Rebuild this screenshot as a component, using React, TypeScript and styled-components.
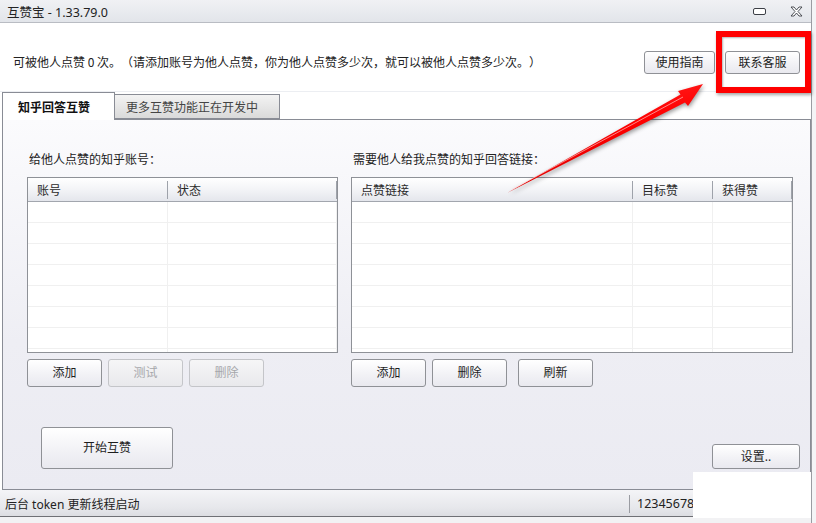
import React from 'react'
import styled, { createGlobalStyle } from 'styled-components'

const GlobalStyle = createGlobalStyle`
  html, body {
    margin: 0;
    padding: 0;
    background: #f4f4f6;
  }
  body {
    font-family: "Noto Sans", "Noto Sans CJK SC", sans-serif;
    font-size: 12px;
    color: #1e1e1e;
    text-spacing-trim: space-all;
  }
`

const Page = styled.div`
  position: relative;
  width: 816px;
  height: 523px;
  overflow: hidden;
`

const Window = styled.div`
  width: 811px;
  border-right: 1px solid #9a9ca2;
  background: #ffffff;
  display: flex;
  flex-direction: column;
`

const TitleBar = styled.div`
  height: 22px;
  display: flex;
  align-items: center;
  padding: 0 0 0 7px;
  background: linear-gradient(#f0f1f4, #e2e5ea);
  border-bottom: 1px solid #b9bcc3;
  font-size: 12.5px;
  color: #222;
`

const TitleText = styled.span`
  flex: 1;
`

const WinButton = styled.span<{ $w: number }>`
  width: ${(p) => p.$w}px;
  height: 22px;
  display: flex;
  align-items: center;
  justify-content: center;
`

const TopBar = styled.div`
  height: 69px;
  display: flex;
  align-items: flex-start;
  padding: 28px 11px 0 13px;
  box-sizing: border-box;
  background: #ffffff;
  border-bottom: 1px solid #eceef2;
`

const Notice = styled.span`
  flex: 1;
  line-height: 22px;
  color: #222;
  font-family: "Noto Sans CJK SC", "Noto Sans", sans-serif;
  text-spacing-trim: space-all;
`

const TopButtons = styled.div`
  display: flex;
  gap: 10px;
`

const Button = styled.button<{ $w: number; $h?: number; $disabled?: boolean }>`
  width: ${(p) => p.$w}px;
  height: ${(p) => p.$h ?? 28}px;
  padding: 0;
  box-sizing: border-box;
  border: 1px solid ${(p) => (p.$disabled ? '#c4c5c9' : '#8f9196')};
  border-radius: 3px;
  background: ${(p) =>
    p.$disabled
      ? 'linear-gradient(#f6f6f7, #e9e9ec)'
      : 'linear-gradient(#ffffff, #f1f1f5 60%, #e9e9ef)'};
  color: ${(p) => (p.$disabled ? '#a6a7ab' : '#1e1e1e')};
  font-family: inherit;
  font-size: 12px;
  line-height: 1;
  cursor: pointer;
`

const TabRow = styled.div`
  height: 27px;
  display: flex;
  align-items: flex-end;
  padding-left: 2px;
  background: #ffffff;
`

const Tab = styled.div<{ $active?: boolean }>`
  box-sizing: border-box;
  width: ${(p) => (p.$active ? 113 : 166)}px;
  height: ${(p) => (p.$active ? 28 : 25)}px;
  margin-bottom: ${(p) => (p.$active ? -1 : 0)}px;
  margin-left: ${(p) => (p.$active ? 0 : -1)}px;
  border: 1px solid #898c95;
  border-bottom: ${(p) => (p.$active ? 'none' : '1px solid #898c95')};
  background: ${(p) => (p.$active ? '#ffffff' : 'linear-gradient(#f3f3f3, #dadada)')};
  display: flex;
  align-items: center;
  padding-left: ${(p) => (p.$active ? 15 : 11)}px;
  font-weight: ${(p) => (p.$active ? 700 : 400)};
  color: ${(p) => (p.$active ? '#111' : '#444')};
  position: relative;
  z-index: ${(p) => (p.$active ? 2 : 1)};
`

const Panel = styled.div`
  margin-left: 2px;
  height: 371px;
  box-sizing: border-box;
  border: 1px solid #898c95;
  background: linear-gradient(#fbfbfd, #eeeef4 60%, #ebebf2);
  display: flex;
  flex-direction: column;
  padding: 32px 10px 20px 24px;
`

const Columns = styled.div`
  display: flex;
  gap: 13px;
`

const Column = styled.div<{ $w: number }>`
  width: ${(p) => p.$w}px;
  display: flex;
  flex-direction: column;
`

const Label = styled.div`
  height: 16px;
  line-height: 16px;
  margin: 0 0 9px 2px;
  color: #222;
`

const ListBox = styled.div`
  height: 176px;
  box-sizing: border-box;
  border: 1px solid #8e9197;
  background: #ffffff;
  overflow: hidden;
`

const Row = styled.div<{ $cols: string; $head?: boolean }>`
  display: grid;
  grid-template-columns: ${(p) => p.$cols};
  height: ${(p) => (p.$head ? 24 : 21)}px;
  box-sizing: border-box;
  border-bottom: 1px solid ${(p) => (p.$head ? '#a2a6ae' : '#f0f0f0')};
  background: ${(p) => (p.$head ? 'linear-gradient(#ffffff, #f3f4f7 50%, #e4e6ec)' : '#ffffff')};
`

const Cell = styled.div<{ $head?: boolean }>`
  display: flex;
  align-items: center;
  padding-left: 9px;
  border-right: 1px solid ${(p) => (p.$head ? '#9ea2aa' : '#f0f0f0')};
  color: #2a2a2a;
  ${(p) => (p.$head ? 'margin: 3px 0 2px;' : '')}
`

const ButtonRow = styled.div`
  display: flex;
  gap: 6px;
  margin-top: 6px;
`

const BottomRow = styled.div`
  margin-top: auto;
  display: flex;
  align-items: flex-end;
  justify-content: space-between;
  padding-left: 14px;
`

const StatusBar = styled.div`
  height: 27px;
  display: flex;
  align-items: center;
  padding-top: 2px;
  box-sizing: border-box;
  background: linear-gradient(#f4f4f7, #e6e7eb 70%, #dcdde2);
  border-bottom: 1px solid #6f7075;
`

const StatusLeft = styled.span`
  width: 624px;
  padding-left: 5px;
  color: #222;
`

const StatusRight = styled.span`
  border-left: 1px solid #9a9ca2;
  height: 18px;
  line-height: 18px;
  padding-left: 7px;
  color: #222;
  font-size: 12.5px;
`

const Beneath = styled.div`
  height: 6px;
  background: #f2f2f4;
`

const Redaction = styled.div`
  position: absolute;
  left: 693px;
  top: 472px;
  width: 118px;
  height: 46px;
  background: #ffffff;
`

const Highlight = styled.div`
  position: absolute;
  left: 716px;
  top: 31px;
  width: 95px;
  height: 62px;
  box-sizing: border-box;
  border: 6px solid #ff0000;
  box-shadow: 1px 2px 3px rgba(0, 0, 0, 0.35), inset 1px 1px 2px rgba(0, 0, 0, 0.3);
`

const ArrowLayer = styled.svg`
  position: absolute;
  left: 0;
  top: 0;
  pointer-events: none;
  filter: drop-shadow(1px 2px 2px rgba(0, 0, 0, 0.4));
`

const leftCols = '140px 1fr'
const rightCols = '281px 80px 1fr'
const rows = Array.from({ length: 8 })

const List: React.FC<{ cols: string; heads: string[] }> = ({ cols, heads }) => (
  <ListBox>
    <Row $cols={cols} $head>
      {heads.map((h) => (
        <Cell key={h} $head>
          {h}
        </Cell>
      ))}
    </Row>
    {rows.map((_, i) => (
      <Row key={i} $cols={cols}>
        {heads.map((h) => (
          <Cell key={h} />
        ))}
      </Row>
    ))}
  </ListBox>
)

export default function App() {
  return (
    <>
      <GlobalStyle />
      <Page>
        <Window>
          <TitleBar>
            <TitleText>互赞宝 - 1.33.79.0</TitleText>
            <WinButton $w={44}>
              <svg width="13" height="7" viewBox="0 0 13 7">
                <rect x="0.5" y="0.5" width="12" height="6" rx="1.5" fill="#fff" stroke="#3c3f46" />
              </svg>
            </WinButton>
            <WinButton $w={30}>
              <svg width="13" height="11" viewBox="0 0 13 11">
                <path
                  d="M1 1h3l2.5 3 2.5-3h3l-4 4.5 4 4.5h-3l-2.5-3-2.5 3h-3l4-4.5z"
                  fill="#fff"
                  stroke="#3c3f46"
                  strokeWidth="0.9"
                  strokeLinejoin="round"
                />
              </svg>
            </WinButton>
          </TitleBar>

          <TopBar>
            <Notice>
              可被他人点赞 0 次。（请添加账号为他人点赞，你为他人点赞多少次，就可以被他人点赞多少次。）
            </Notice>
            <TopButtons>
              <Button $w={71} $h={23}>使用指南</Button>
              <Button $w={75} $h={23}>联系客服</Button>
            </TopButtons>
          </TopBar>

          <TabRow>
            <Tab $active>知乎回答互赞</Tab>
            <Tab>更多互赞功能正在开发中</Tab>
          </TabRow>

          <Panel>
            <Columns>
              <Column $w={311}>
                <Label>给他人点赞的知乎账号：</Label>
                <List cols={leftCols} heads={['账号', '状态']} />
                <ButtonRow>
                  <Button $w={75}>添加</Button>
                  <Button $w={75} $disabled>测试</Button>
                  <Button $w={75} $disabled>删除</Button>
                </ButtonRow>
              </Column>
              <Column $w={442}>
                <Label>需要他人给我点赞的知乎回答链接：</Label>
                <List cols={rightCols} heads={['点赞链接', '目标赞', '获得赞']} />
                <ButtonRow>
                  <Button $w={75}>添加</Button>
                  <Button $w={75} style={{ marginRight: 5 }}>删除</Button>
                  <Button $w={75}>刷新</Button>
                </ButtonRow>
              </Column>
            </Columns>
            <BottomRow>
              <Button $w={132} $h={42}>开始互赞</Button>
              <Button $w={88} $h={25}>设置..</Button>
            </BottomRow>
          </Panel>

          <StatusBar>
            <StatusLeft>后台 token 更新线程启动</StatusLeft>
            <StatusRight>12345678</StatusRight>
          </StatusBar>
          <Beneath />
        </Window>

        <Redaction />
        <Highlight />
        <ArrowLayer width="816" height="523" viewBox="0 0 816 523">
          <defs>
            <linearGradient id="arrowFill" x1="0" y1="0" x2="0.3" y2="1">
              <stop offset="0" stopColor="#ff2a2a" />
              <stop offset="0.5" stopColor="#ff0000" />
              <stop offset="1" stopColor="#d80000" />
            </linearGradient>
          </defs>
          <polygon
            points="507,193 680.5,94.5 678,91 703,84 688,106 685,102.5"
            fill="url(#arrowFill)"
          />
          <line x1="512" y1="189.5" x2="683" y2="97" stroke="#ffd6d6" strokeWidth="0.8" opacity="0.8" />
        </ArrowLayer>
      </Page>
    </>
  )
}
